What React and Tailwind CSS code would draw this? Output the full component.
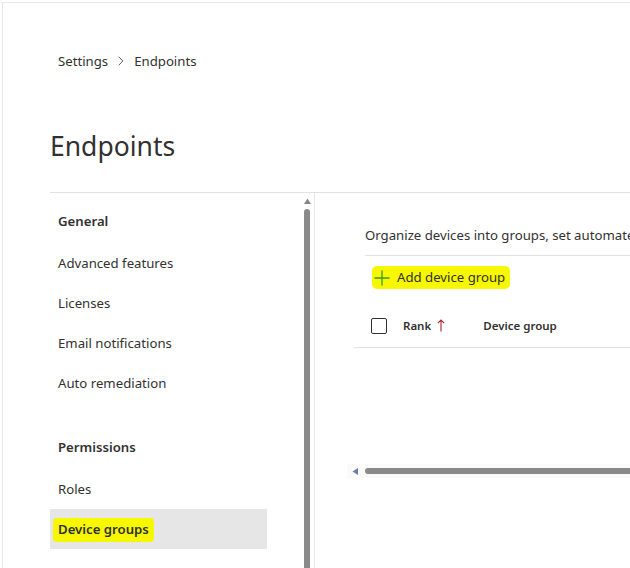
import React from "react";

function NavItem({ children, bold, selected, className = "" }) {
  return (
    <div
      className={`h-10 flex items-center pl-2 pt-[2px] w-[217px] text-[13.2px] ${
        bold ? "font-semibold" : ""
      } ${selected ? "bg-[#e6e6e6]" : ""} ${className}`}
    >
      {children}
    </div>
  );
}

export default function App() {
  return (
    <div
      className="w-[630px] h-[568px] bg-white overflow-hidden pt-[2px] text-[#323130]"
      style={{ fontFamily: '"Segoe UI", "Noto Sans", sans-serif' }}
    >
      <div className="h-[566px] ml-[2px] border-t border-l border-[#e8e8e8] flex flex-col">
        {/* Breadcrumb */}
        <div className="pl-[55px] pt-[48px] h-[70px] flex items-start text-[13.2px] leading-[20px]">
          <span>Settings</span>
          <svg className="mx-[10px] mt-[5px]" width="6" height="10" viewBox="0 0 6 10">
            <path d="M0.8 0.8 L4.8 5 L0.8 9.2" fill="none" stroke="#605e5c" strokeWidth="1" />
          </svg>
          <span>Endpoints</span>
        </div>
        {/* Title */}
        <div className="pl-[47px] pt-[55px] h-[119px]">
          <h1 className="text-[26.5px] leading-[36px] font-normal">Endpoints</h1>
        </div>
        {/* Body */}
        <div className="ml-[47px] border-t border-[#e1e1e1] flex flex-1 min-h-0">
          {/* Left nav */}
          <div className="w-[251px] pt-[8px]">
            <NavItem bold className="mb-[2px]">General</NavItem>
            <NavItem>Advanced features</NavItem>
            <NavItem>Licenses</NavItem>
            <NavItem>Email notifications</NavItem>
            <NavItem className="mb-[24px]">Auto remediation</NavItem>
            <NavItem bold className="mb-[2px]">Permissions</NavItem>
            <NavItem>Roles</NavItem>
            <NavItem selected>
              <span className="bg-[#f7f700] rounded-[4px] -ml-[5px] px-[5px] py-[2px] font-semibold">
                Device groups
              </span>
            </NavItem>
          </div>
          {/* Vertical scrollbar */}
          <div className="w-[12px] flex flex-col items-center pt-[5px]">
            <svg width="7" height="6" viewBox="0 0 7 6">
              <path d="M0 6 L3.5 0.5 L7 6 Z" fill="#858585" />
            </svg>
            <div className="mt-[5px] w-[6px] flex-1 bg-[#8a8a8a] rounded-t-[3px]" />
          </div>
          <div className="w-[1px] bg-[#e8e8e8] ml-[1px]" />
          {/* Right content */}
          <div className="flex-1 min-w-0 overflow-hidden">
            <div className="pl-[50px] pt-[32px]">
              <div className="text-[13.2px] whitespace-nowrap h-[20px] leading-[20px]">
                Organize devices into groups, set automated remediation levels
              </div>
              <div className="mt-[10px] border-t border-[#e1e1e1]" />
              <div className="mt-[10px] flex">
                <div className="ml-[7px] flex items-center h-[23px] bg-[#f7f700] rounded-[5px] pl-[2px] pr-[5px] text-[13.2px]">
                  <svg width="16" height="16" viewBox="0 0 16 16" className="mr-[7px]">
                    <path d="M8 0.5 V15.5 M0.5 8 H15.5" stroke="#3a9b2c" strokeWidth="1.3" fill="none" />
                  </svg>
                  <span>Add device group</span>
                </div>
              </div>
            </div>
            <div className="ml-[39px] mt-[17px] border-b border-[#e1e1e1] h-[42px] flex items-center pb-[2px]">
              <div className="ml-[17px] w-[16px] h-[16px] border border-[#323130] rounded-[2px]" />
              <span className="ml-[16px] text-[11.5px] font-semibold">Rank</span>
              <svg className="ml-[6px]" width="8" height="13" viewBox="0 0 8 13">
                <path d="M4 12.5 V1 M0.8 4.2 L4 1 L7.2 4.2" stroke="#a4262c" strokeWidth="1.1" fill="none" />
              </svg>
              <span className="ml-[38px] text-[11.5px] font-semibold">Device group</span>
            </div>
            <div className="ml-[32px] mt-[116px] h-[14px] bg-[#fafafa] flex items-center">
              <svg className="ml-[5px]" width="6" height="7" viewBox="0 0 6 7">
                <path d="M6 0 L0.5 3.5 L6 7 Z" fill="#6b7fa8" />
              </svg>
              <div className="ml-[7px] h-[6px] flex-1 bg-[#8a8a8a] rounded-l-[3px]" />
            </div>
          </div>
        </div>
      </div>
    </div>
  );
}
